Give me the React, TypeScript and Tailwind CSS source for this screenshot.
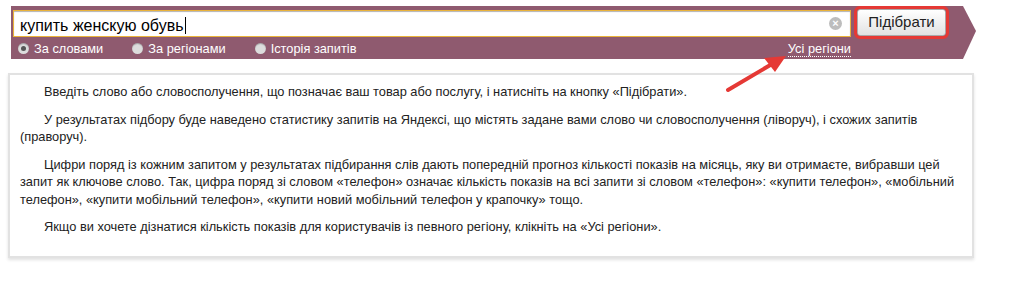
import React from 'react';

const font = { fontFamily: '"Liberation Sans", Arial, sans-serif' };

const Radio: React.FC<{ label: string; checked?: boolean }> = ({ label, checked }) => (
  <label className="flex items-center gap-[5px] text-[12.8px] text-white">
    <span className="flex h-[11px] w-[11px] items-center justify-center rounded-full bg-[#dcdcdc] shadow-[inset_0_1px_1px_rgba(0,0,0,0.25)]">
      {checked && <span className="h-[5px] w-[5px] rounded-full bg-[#555]" />}
    </span>
    {label}
  </label>
);

const paragraphs = [
  'Введіть слово або словосполучення, що позначає ваш товар або послугу, і натисніть на кнопку «Підібрати».',
  'У результатах підбору буде наведено статистику запитів на Яндексі, що містять задане вами слово чи словосполучення (ліворуч), і схожих запитів (праворуч).',
  'Цифри поряд із кожним запитом у результатах підбирання слів дають попередній прогноз кількості показів на місяць, яку ви отримаєте, вибравши цей запит як ключове слово. Так, цифра поряд зі словом «телефон» означає кількість показів на всі запити зі словом «телефон»: «купити телефон», «мобільний телефон», «купити мобільний телефон», «купити новий мобільний телефон у крапочку» тощо.',
  'Якщо ви хочете дізнатися кількість показів для користувачів із певного регіону, клікніть на «Усі регіони».',
];

export default function App() {
  return (
    <div className="relative h-[281px] w-[1018px] bg-white" style={font}>
      {/* search bar */}
      <div className="ml-[11px] flex pt-[6px]">
        <div className="flex h-[53px] w-[952px] gap-[6px] bg-[#8f5a6f] pl-[2px] pt-[4px]">
          <div className="flex w-[838px] flex-col">
            <div className="flex h-[27px] items-center border border-[#eab33a] bg-white pl-[6px] pr-[8px] shadow-[inset_0_1px_1px_rgba(0,0,0,0.3)]">
              <span className="flex-1 text-[16px] leading-none text-black">
                купить женскую обувь<span className="ml-[1px] inline-block h-[17px] w-[1px] translate-y-[3px] bg-black" />
              </span>
              <span className="flex h-[13px] w-[13px] items-center justify-center rounded-full bg-[#bdbdbd] text-[11px] font-bold leading-none text-white">
                ×
              </span>
            </div>
            <div className="mt-[2px] flex items-center justify-between pl-[5px]">
              <div className="flex items-center gap-[29px]">
                <Radio label="За словами" checked />
                <Radio label="За регіонами" />
                <Radio label="Історія запитів" />
              </div>
              <span className="border-b border-dotted border-white text-[12.8px] leading-[15px] text-white">Усі регіони</span>
            </div>
          </div>
          <div>
            <button className="mt-[-1px] h-[27px] w-[89px] rounded-[3px] border border-[#a9a9a9] bg-gradient-to-b from-white to-[#e2e2e2] text-[15px] text-[#222] outline-3 outline-[#e53935] outline-solid">
              Підібрати
            </button>
          </div>
        </div>
        <svg width="13" height="53" viewBox="0 0 13 53" className="block">
          <polygon points="0,0 13,25 0,53" fill="#8f5a6f" />
        </svg>
      </div>

      {/* info box */}
      <div className="ml-[8px] mt-[14px] h-[185px] w-[966px] border-2 border-[#e2e2e2] bg-white px-[10px] pt-[8px] text-[12.8px] leading-[17.5px] text-[#222] shadow-[0_2px_3px_rgba(0,0,0,0.12)]">
        {paragraphs.map((p, i) => (
          <p key={i} className="mb-[10px] indent-[24px]">
            {p}
          </p>
        ))}
      </div>

      {/* annotation arrow */}
      <svg className="pointer-events-none absolute left-0 top-0" width="1018" height="281">
        <line x1="728" y1="90" x2="772" y2="64" stroke="#e53935" strokeWidth="4" strokeLinecap="round" />
        <polygon points="786,56 764,58 775,72" fill="#e53935" />
      </svg>
    </div>
  );
}
